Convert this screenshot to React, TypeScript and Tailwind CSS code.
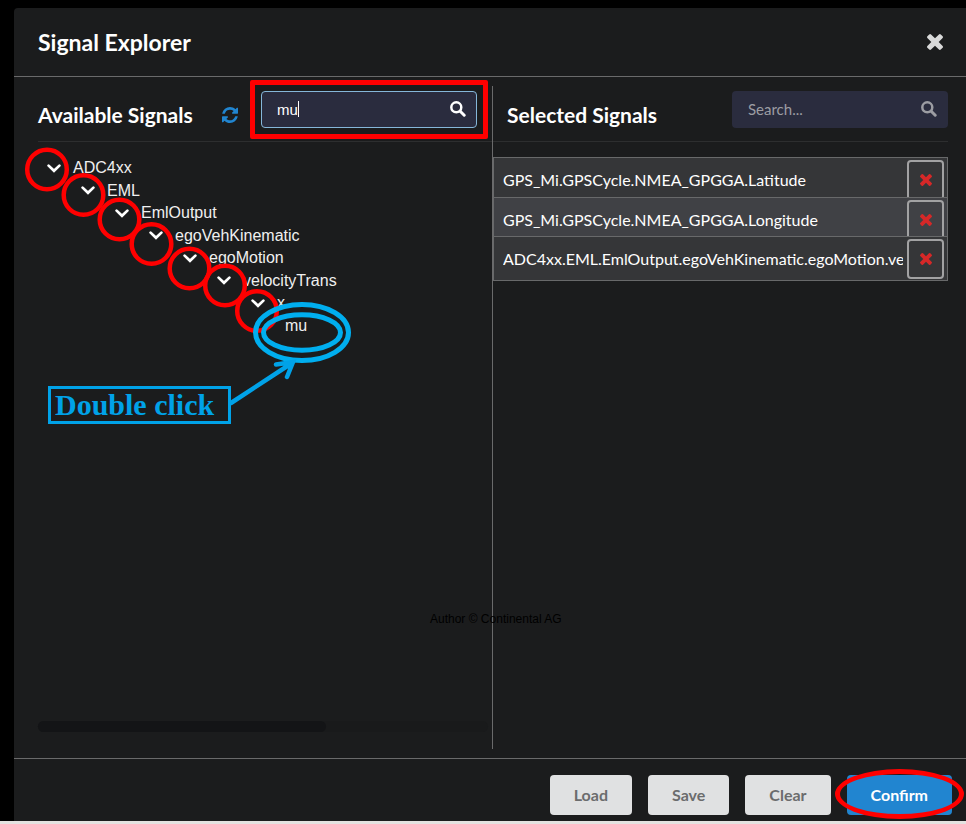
import { useState } from "react";

const TREE = ["ADC4xx", "EML", "EmlOutput", "egoVehKinematic", "egoMotion", "velocityTrans", "x"];

const SELECTED = [
  "GPS_Mi.GPSCycle.NMEA_GPGGA.Latitude",
  "GPS_Mi.GPSCycle.NMEA_GPGGA.Longitude",
  "ADC4xx.EML.EmlOutput.egoVehKinematic.egoMotion.ve",
];

function CrossIcon({ className }: { className: string }) {
  return (
    <svg viewBox="110 366 1188 1188" fill="currentColor" className={className} aria-hidden="true">
      <path d="M1298 1322q0 40-28 68l-136 136q-28 28-68 28t-68-28l-294-294-294 294q-28 28-68 28t-68-28l-136-136q-28-28-28-68t28-68l294-294-294-294q-28-28-28-68t28-68l136-136q28-28 68-28t68 28l294 294 294-294q28-28 68-28t68 28l136 136q28 28 28 68t-28 68l-294 294 294 294q28 28 28 68z" />
    </svg>
  );
}

function RefreshIcon({ className }: { className: string }) {
  return (
    <svg viewBox="128 128 1536 1536" fill="currentColor" className={className} aria-hidden="true">
      <path d="M1639 1056q0 5-1 7-64 268-268 434.5t-478 166.5q-146 0-282.5-55t-243.5-157l-129 129q-19 19-45 19t-45-19-19-45v-448q0-26 19-45t45-19h448q26 0 45 19t19 45-19 45l-137 137q71 66 161 102t187 36q134 0 250-65t186-179q11-17 53-117 8-23 30-23h192q13 0 22.5 9.5t9.5 22.5zm25-800v448q0 26-19 45t-45 19h-448q-26 0-45-19t-19-45 19-45l138-138q-148-137-349-137-134 0-250 65t-186 179q-11 17-53 117-8 23-30 23h-199q-13 0-22.5-9.5t-9.5-22.5v-7q65-268 270-434.5t480-166.5q146 0 284 55.5t245 156.5l130-129q19-19 45-19t45 19 19 45z" />
    </svg>
  );
}

function SearchIcon({ className }: { className: string }) {
  return (
    <svg viewBox="0 0 16 16" fill="none" stroke="currentColor" className={className} aria-hidden="true">
      <circle cx="6.3" cy="6.3" r="5" strokeWidth="2.5" />
      <path d="M10.2 10.2L14.2 14.2" strokeWidth="3" strokeLinecap="round" />
    </svg>
  );
}

function ChevronIcon() {
  return (
    <svg viewBox="0 0 14 9" fill="none" stroke="currentColor" className="h-[9px] w-[14px]" aria-hidden="true">
      <path d="M1.6 1.6L7 6.8L12.4 1.6" strokeWidth="2.7" strokeLinecap="round" />
    </svg>
  );
}

function TreeMarks() {
  return (
    <svg
      viewBox="0 0 350 300"
      fill="none"
      className="pointer-events-none absolute top-0 left-0 h-[300px] w-[350px]"
      aria-hidden="true"
    >
      <g stroke="#ff0000" strokeWidth="4.5">
        <circle cx="33" cy="27.5" r="19.8" />
        <circle cx="69.5" cy="53" r="19.8" />
        <circle cx="105.5" cy="77.5" r="19.8" />
        <circle cx="137.5" cy="102" r="19.8" />
        <circle cx="175.5" cy="126.5" r="19.8" />
        <circle cx="211" cy="143.5" r="19.8" />
        <circle cx="243" cy="169" r="19.8" />
      </g>
      <g stroke="#00aeef" strokeWidth="5">
        <ellipse cx="288" cy="190.5" rx="46.5" ry="28" />
        <ellipse cx="288" cy="190.5" rx="38.5" ry="17.8" />
      </g>
      <path d="M217 261L278 221M262 222.5L279 220L273 235" stroke="#00a2e8" strokeWidth="4.5" strokeLinecap="round" />
    </svg>
  );
}

export default function App() {
  const [query, setQuery] = useState("mu");
  const [filter, setFilter] = useState("");

  return (
    <div className="relative flex min-h-screen flex-col overflow-hidden border-b-3 border-[#e4e2e0] bg-black pt-2 pl-3.5 font-['Lato',sans-serif] text-white">
      <main className="relative flex flex-1 flex-col rounded-tl bg-[#1b1c1d]">
        <header className="flex h-[69px] items-center justify-between border-b border-[#6a6a6b] pr-[23px] pl-6">
          <h1 className="text-[23px] leading-7 font-bold">Signal Explorer</h1>
          <button type="button" aria-label="Close" className="text-[#d9d9d9]">
            <CrossIcon className="size-4" />
          </button>
        </header>

        <div className="grid flex-1 grid-cols-[479fr_473fr] pt-[9px] pb-[9px]">
          <section className="flex min-w-0 flex-col border-r border-[#6a6a6b]">
            <div className="ml-6 flex h-14 items-start border-b border-[#2d2e2f] pt-[5px]">
              <h2 className="mt-2.5 text-[21px] leading-7 font-bold">Available Signals</h2>
              <button type="button" aria-label="Refresh" className="mt-4 ml-auto text-[#2185d0]">
                <RefreshIcon className="size-4" />
              </button>
              <div className="relative mr-[15px] ml-[23px] w-[216px]">
                <input
                  type="text"
                  aria-label="Search available signals"
                  value={query}
                  onChange={(e) => setQuery(e.target.value)}
                  className="block h-[37px] w-full rounded border border-[#85b7d9] bg-[#2a2c3e] pr-9 pl-[15px] font-['Liberation_Sans',sans-serif] text-[15px] text-white outline-none"
                />
                <span className="absolute top-[10px] left-[37px] h-4 w-px bg-white" />
                <SearchIcon className="absolute top-2.5 right-[11px] size-4 text-white" />
                <span className="pointer-events-none absolute -inset-x-[11px] -inset-y-[11px] rounded-xs border-5 border-[#ff0000]" />
              </div>
            </div>

            <div className="relative flex-1">
              <ul className="mt-[15px] grid h-[180px] auto-rows-fr font-['Liberation_Sans',sans-serif] text-base leading-[22px] text-[#f0f0f0]">
                {TREE.map((name, depth) => (
                  <li key={name} style={{ paddingLeft: 33 + depth * 34 }}>
                    <button type="button" className="flex items-center gap-3 text-white">
                      <ChevronIcon />
                      <span className="text-[#f0f0f0]">{name}</span>
                    </button>
                  </li>
                ))}
                <li className="pl-[271px]">mu</li>
              </ul>
              <TreeMarks />
              <div className="absolute top-[244px] left-[34px] h-[38px] w-[183px] border-3 border-[#00a2e8] pl-1 font-['Liberation_Serif',serif] text-[30px] leading-8 font-bold whitespace-nowrap text-[#00a2e8]">
                Double click
              </div>
            </div>

            <div className="mr-1 mb-[17px] ml-6 h-[11px] rounded-md bg-[#191a1b]">
              <div className="h-full w-[64%] rounded-md bg-[#131416]" />
            </div>
          </section>

          <section className="flex min-w-0 flex-col pr-[18px]">
            <div className="flex h-14 items-start justify-between border-b border-[#2d2e2f] pt-[5px] pl-3.5">
              <h2 className="mt-2.5 text-[21px] leading-7 font-bold">Selected Signals</h2>
              <div className="relative w-[216px]">
                <input
                  type="text"
                  aria-label="Search selected signals"
                  placeholder="Search..."
                  value={filter}
                  onChange={(e) => setFilter(e.target.value)}
                  className="block h-[37px] w-full rounded bg-[#2a2c3e] pr-9 pb-0.5 pl-4 text-[15px] text-white outline-none placeholder:text-[#9c9da3]"
                />
                <SearchIcon className="absolute top-2.5 right-[11px] size-4 text-[#9c9da3]" />
              </div>
            </div>

            <ul className="mt-[15px] border border-[#68696a]">
              {SELECTED.map((name) => (
                <li
                  key={name}
                  className="flex h-10 items-start overflow-hidden border-b border-[#68696a] bg-[#353638] pt-0.5 pr-[3px] pl-[9px] last:h-[43px] last:border-b-0 even:h-[39px] even:bg-[#404145]"
                >
                  <span className="mr-1 min-w-0 flex-1 overflow-hidden pt-2 text-base leading-6 whitespace-nowrap">{name}</span>
                  <button
                    type="button"
                    aria-label={"Remove " + name}
                    className="flex h-10 w-[37px] shrink-0 items-center justify-center rounded border-2 border-[#a2a2a3] text-[#d62828]"
                  >
                    <CrossIcon className="size-3" />
                  </button>
                </li>
              ))}
            </ul>
          </section>
        </div>

        <footer className="flex h-[63px] items-start justify-end gap-4 border-t border-[#6a6a6b] pt-4 pr-3.5 text-base font-bold">
          <button type="button" className="h-10 rounded bg-[#e0e1e2] px-6 text-[#6b6c6d]">Load</button>
          <button type="button" className="h-10 rounded bg-[#e0e1e2] px-6 text-[#6b6c6d]">Save</button>
          <button type="button" className="h-10 rounded bg-[#e0e1e2] px-6 text-[#6b6c6d]">Clear</button>
          <div className="relative">
            <button type="button" className="h-10 rounded bg-[#2185d0] px-6 text-white">Confirm</button>
            <span className="pointer-events-none absolute -inset-x-3 -top-1.5 -bottom-1 rounded-[50%] border-5 border-[#ff0000]" />
          </div>
        </footer>

        <p className="absolute top-[603px] left-[416px] font-['Liberation_Sans',sans-serif] text-xs leading-4 text-black">
          Author © Continental AG
        </p>
      </main>
    </div>
  );
}
